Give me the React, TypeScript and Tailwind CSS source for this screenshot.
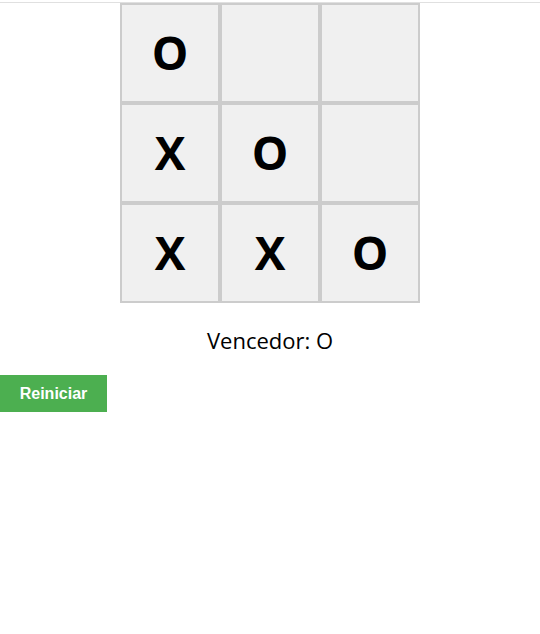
import React from "react";

const board = ["O", "", "", "X", "O", "", "X", "X", "O"];

export default function App() {
  return (
    <div className="bg-white min-h-[634px]" style={{ fontFamily: '"Open Sans", "Noto Sans", sans-serif' }}>
      <div className="h-[2px]" />
      <div className="h-px bg-[#e0e0e0]" />
      <div className="flex justify-center">
        <div className="grid grid-cols-[100px_100px_100px]">
          {board.map((v, i) => (
            <button
              key={i}
              className="w-[100px] h-[100px] bg-[#f0f0f0] border-2 border-[#cccccc] flex items-center justify-center text-[46px] font-bold text-black leading-none pb-[3px]"
              style={{ fontFamily: '"Open Sans", sans-serif' }}
            >
              {v}
            </button>
          ))}
        </div>
      </div>
      <div className="mt-[22px] text-center text-[22px] leading-[30px] text-black">Vencedor: O</div>
      <button
        className="mt-[20px] block w-[107px] h-[37px] bg-[#4caf50] text-white font-bold text-[16px]"
        style={{ fontFamily: '"Liberation Sans", Arial, sans-serif' }}
      >
        Reiniciar
      </button>
    </div>
  );
}
